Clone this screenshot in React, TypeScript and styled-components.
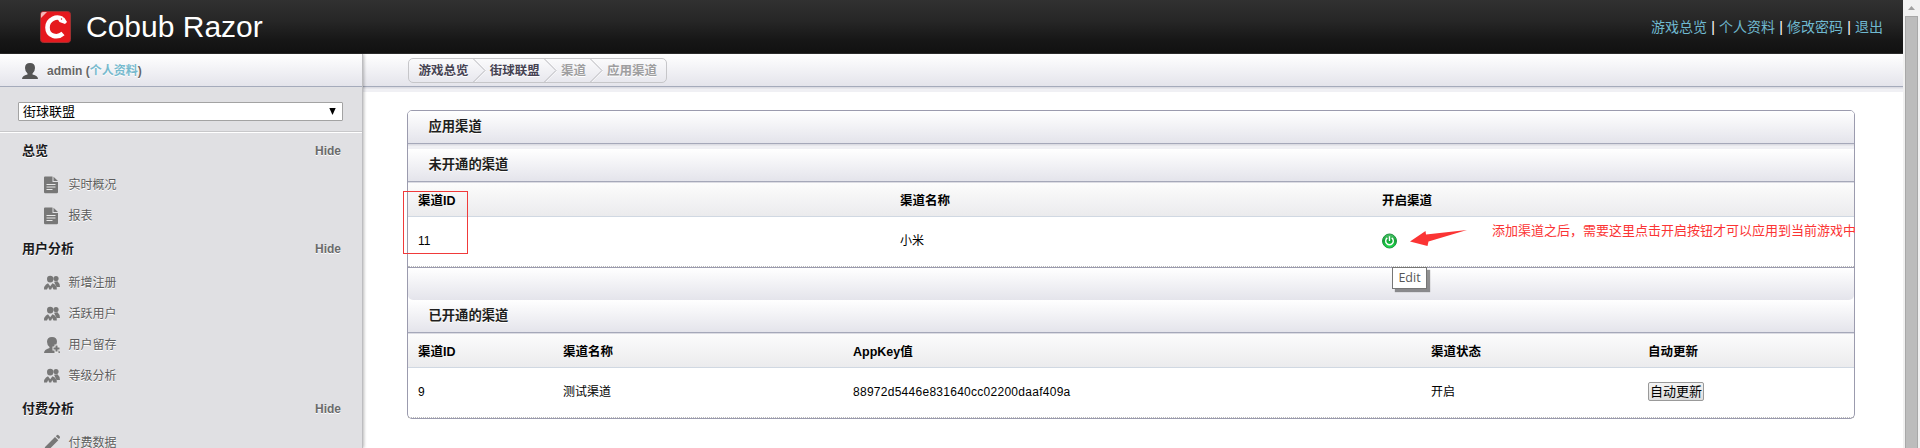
import React from 'react';
import styled, { createGlobalStyle } from 'styled-components';

const Global = createGlobalStyle`
  * { box-sizing: border-box; }
  html, body { margin: 0; height: 448px; overflow: hidden; background: #fff; }
  body { font: 12px/16px "Liberation Sans", Arial, "Noto Sans CJK SC", sans-serif; color: #000; }
`;
const Viewport = styled.div`
  display: grid;
  grid-template-columns: 1903px 17px;
  height: 448px;
  overflow: hidden;
`;
const Page = styled.div`
  display: grid;
  grid-template-rows: 54px 394px;
  min-width: 0;
`;
const Header = styled.header`
  display: flex;
  align-items: center;
  padding: 0 20px 0 40px;
  color: #fff;
  background: linear-gradient(#313131, #262626 40%, #171717 75%, #111);
  border-bottom: 1px solid #2b2b2b;
`;
const Brand = styled.h1`
  margin: 0 auto 0 14px;
  font-size: 30px;
  line-height: 52px;
  font-weight: 400;
`;
const TopLinks = styled.nav`
  display: flex;
  gap: 4.2px;
  font-size: 14px;
  line-height: 20px;
  white-space: nowrap;
`;
const Link = styled.a<{ $light?: boolean }>`
  color: ${p => (p.$light ? '#77bace' : '#6fb9d0')};
  text-decoration: none;
`;
const Body = styled.div`
  display: grid;
  grid-template-columns: 363px 1540px;
  height: 394px;
`;
const Sidebar = styled.aside`
  z-index: 1;
  height: 394px;
  overflow: hidden;
  background: #e0e0e3;
  border-right: 1px solid #bdbdc0;
  box-shadow: 1px 0 3px rgba(0,0,0,.28);
`;
const UserBar = styled.div`
  display: flex;
  align-items: center;
  height: 33px;
  gap: 9px;
  padding: 1px 0 0 22px;
  color: #666;
  font-weight: 700;
  text-shadow: 0 1px 0 #fff;
  background: linear-gradient(#fff, #e4e4eb);
  border-bottom: 1px solid #a5abbb;
`;
const Picker = styled.div`
  height: 46px;
  padding: 15px 19px 0 18px;
  border-bottom: 1px solid #fff;
  box-shadow: inset 0 -1px #c8c8ca;
`;
const SelectBox = styled.div`
  display: flex;
  align-items: center;
  justify-content: space-between;
  height: 19px;
  padding: 0 6px 0 4px;
  font-size: 13px;
  line-height: 15px;
  background: #fff;
  border: 1px solid #a3a3a3;
  border-radius: 1px;
`;
const Group = styled.section`
  padding-top: 8px;
`;
const GroupHead = styled.div`
  display: flex;
  align-items: center;
  justify-content: space-between;
  height: 20px;
  padding: 0 21px 0 22px;
  text-shadow: 0 1px 0 #fff;
`;
const GroupTitle = styled.h3`
  margin: 0;
  font-size: 13px;
  color: #1a1a1c;
`;
const Toggle = styled.span`
  font-weight: 700;
  color: #6b6b6b;
`;
const Items = styled.ul`
  list-style: none;
  margin: 0;
  padding: 8px 0 0 44px;
`;
const Item = styled.li`
  display: flex;
  align-items: center;
  height: 31px;
  gap: 8.5px;
  color: #5c5c5c;
  text-shadow: 0 1px 0 #fff;
`;
const Main = styled.main`
  min-width: 0;
`;
const CrumbBar = styled.div`
  height: 33px;
  padding: 4px 0 0 45px;
  background: linear-gradient(#fff, #e4e4eb);
  border-bottom: 1px solid #a5abbb;
  box-shadow: 0 1px 0 #dcdce3, 0 2px 0 #e6e6eb, 0 5px 0 #f0f0f4;
`;
const Crumbs = styled.div`
  display: flex;
  align-items: center;
  width: 259px;
  height: 25px;
  padding-left: 9.5px;
  border: 1px solid #c6c6c9;
  border-radius: 5px;
  text-shadow: 0 1px 0 #fff;
`;
const Crumb = styled.span<{ $dim?: boolean }>`
  font-size: 12.5px;
  font-weight: 700;
  white-space: nowrap;
  color: ${p => (p.$dim ? '#9e9ea0' : '#454252')};
`;
const Chevron = styled.svg`
  display: block;
  flex: none;
  margin: 0 4px 0 4.2px;
`;
const Panel = styled.section`
  position: relative;
  width: 1448px;
  height: 309px;
  margin: 23px 0 0 44px;
  background: #fff;
  border: 1px solid #9b9bae;
  border-radius: 5px;
`;
const PanelHead = styled.h2<{ $first?: boolean }>`
  display: flex;
  align-items: center;
  height: 33px;
  margin: 0 0 ${p => (p.$first ? 5 : 1)}px;
  padding-left: 20.5px;
  font-size: 13.3px;
  color: #1f1f20;
  text-shadow: 0 1px 0 #fff;
  background: linear-gradient(#fff, #e4e4eb);
  border-bottom: 1px solid #a5a8b9;
  border-radius: ${p => (p.$first ? '4px 4px 0 0' : '0')};
  box-shadow: ${p => (p.$first ? '0 1px 0 #dcdce3, 0 2px 0 #e6e6eb, 0 5px 0 #f0f0f4' : '0 1px 0 #dcdce3')};
`;
const PanelFoot = styled.div`
  height: 33px;
  border-top: 1px solid #9b9bae;
  background: linear-gradient(#fff, #e4e4eb);
  border-radius: 0 0 5px 5px;
`;
const Row = styled.div<{ $cols: string; $head?: boolean }>`
  display: grid;
  grid-template-columns: ${p => p.$cols};
  align-items: center;
  height: ${p => (p.$head ? 34 : 50)}px;
  padding: ${p => (p.$head ? '2px 0 0 10px' : '0 0 2px 10px')};
  font-size: ${p => (p.$head ? 12.5 : 12)}px;
  font-weight: ${p => (p.$head ? 700 : 400)};
  background: ${p => (p.$head ? 'linear-gradient(#fcfcfc, #ebebed)' : 'transparent')};
  border-bottom: ${p => (p.$head ? '1px solid #d0d8e2' : '1px dotted #bbb')};
`;
const AppKey = styled.span`
  letter-spacing: .27px;
`;
const UpdateButton = styled.button`
  height: 19px;
  width: 56px;
  padding: 0;
  font: 13px/15px "Liberation Sans", "Noto Sans CJK SC", sans-serif;
  color: #000;
  background: linear-gradient(#f4f4f4, #dedede);
  border: 1px solid #999;
  border-radius: 2px;
`;
const Highlight = styled.div`
  position: absolute;
  left: -5px;
  top: 80px;
  width: 65px;
  height: 63px;
  border: 1px solid #f03a3a;
`;
const Note = styled.div`
  position: absolute;
  left: 1084px;
  top: 110px;
  width: 363px;
  overflow: hidden;
  font-size: 13px;
  line-height: 20px;
  white-space: nowrap;
  color: #fb3434;
`;
const Arrow = styled.svg`
  position: absolute;
  left: 1002px;
  top: 119px;
`;
const Tooltip = styled.div`
  position: absolute;
  left: 984px;
  top: 156px;
  width: 35px;
  height: 22px;
  font: 12.5px/20px "Open Sans", "Noto Sans", sans-serif;
  text-align: center;
  color: #575757;
  background: #fff;
  border: 1px solid #767676;
  box-shadow: 3px 3px 1px rgba(0,0,0,.42);
`;
const Scrollbar = styled.div`
  display: flex;
  flex-direction: column;
  align-items: center;
  background: #f1f1f1;
`;
const ScrollButton = styled.svg`
  display: block;
  flex: none;
`;
const Thumb = styled.div`
  flex: 1;
  width: 13px;
  background: #bcbcbc;
  border: 1px solid #a8a8a8;
  border-bottom: 0;
`;

type IconKind = 'doc' | 'users' | 'add' | 'pencil';
const MenuIcon = ({ kind }: { kind: IconKind }) => (
  <svg width="16" height="18" viewBox="0 0 16 18" fill="#777">
    {kind === 'doc' && <>
      <path d="M1 .5h7.500v5.500H14V16q0 1.300-1.300 1.300H1.300Q0 17.300 0 16V1.500Q0 .5 1 .5zM9.500 .8L14 5H9.500z" />
      <path d="M2.500 8.500h9M2.500 11h9M2.500 13.500h6" stroke="#e8e8e8" strokeWidth="1.100" />
    </>}
    {kind === 'users' && <>
      <circle cx="12" cy="4.600" r="2.600" />
      <path d="M10 7.800l3.500-.5Q16 9.500 16 13h-3.500z" />
      <path d="M6.200 1.700q3.200 0 3.200 3.200 0 3.500-3.200 3.500T3 4.900q0-3.200 3.200-3.200zM0 15.500q0-3.500 2-5l2-1.200 2.200 3 2.300-3 2.300 1.200q2 1.500 2 5H9.500L8.200 13l-1 2.500h-2l-1-2.500-1.200 2.500z" />
    </>}
    {kind === 'add' && <>
      <path d="M8 1q5 0 5 4.700Q13 9 10.500 11v1q5.500 1.500 5.500 5H0q0-3.500 5.500-5v-1Q3 9 3 5.700 3 1 8 1z" />
      <path d="M12.500 8.500V17M8.500 12.500H16" stroke="#e8e8e8" strokeWidth="4" />
      <path d="M12.500 9.500v6M9.500 12.500h6" stroke="#777" strokeWidth="2" />
    </>}
    {kind === 'pencil' && <path d="M1 13L11 3l3.300 3.300L4.300 16.300 0 17.500zM11.800 2.200l1-1q1-.8 2 .2l.8.800q.8 1 0 2l-.8.800z" />}
  </svg>
);

const Separator = () => (
  <Chevron width="13" height="23" viewBox="0 0 13 23" fill="none">
    <path d="M1.500 0L13 11.500L1.500 23" stroke="#fff" />
    <path d="M.5 0L12 11.500L.5 23" stroke="#b4b4b9" />
  </Chevron>
);

const groups: { title: string; items: [IconKind, string][] }[] = [
  { title: '总览', items: [['doc', '实时概况'], ['doc', '报表']] },
  { title: '用户分析', items: [['users', '新增注册'], ['users', '活跃用户'], ['add', '用户留存'], ['users', '等级分析']] },
  { title: '付费分析', items: [['pencil', '付费数据']] },
];
const pendingCols = '482px 482px 1fr';
const openCols = '145px 290px 578px 217px 1fr';

export default function App() {
  return (
    <>
      <Global />
      <Viewport>
        <Page>
          <Header>
            <svg width="32" height="32" viewBox="0 0 32 32">
              <rect x=".5" y=".5" width="30" height="31" rx="3" fill="#e5191e" stroke="#9d3030" />
              <path d="M1 7V3q0-2 2-2h4z" fill="#f4b8b8" />
              <path d="M22 8C17 4.500 7.500 8 7.500 16.500C7.500 25.500 17.500 27.500 23 22.500" fill="none" stroke="#fff" strokeWidth="4.600" />
              <path d="M16 5.500q5-1.500 8.500 1.500l2.500 4-2 2-5.500-2z" fill="#fff" />
              <circle cx="21.500" cy="8" r=".7" fill="#e5191e" />
            </svg>
            <Brand>Cobub Razor</Brand>
            <TopLinks>
              <Link>游戏总览</Link>|<Link>个人资料</Link>|<Link>修改密码</Link>|<Link>退出</Link>
            </TopLinks>
          </Header>
          <Body>
            <Sidebar>
              <UserBar>
                <svg width="16" height="16" viewBox="0 0 16 16" fill="#555">
                  <path d="M8 0q5 0 5 5 0 3.500-2.500 5.500v1Q16 12.500 16 16H0q0-3.500 5.500-4.500v-1Q3 8.500 3 5q0-5 5-5z" />
                </svg>
                <span>admin (<Link $light>个人资料</Link>)</span>
              </UserBar>
              <Picker>
                <SelectBox>
                  <span>街球联盟</span>
                  <svg width="7" height="7" viewBox="0 0 7 7"><path d="M.3 0h6.400L3.500 7z" /></svg>
                </SelectBox>
              </Picker>
              {groups.map(group => (
                <Group key={group.title}>
                  <GroupHead><GroupTitle>{group.title}</GroupTitle><Toggle>Hide</Toggle></GroupHead>
                  <Items>
                    {group.items.map(([kind, label]) => <Item key={label}><MenuIcon kind={kind} />{label}</Item>)}
                  </Items>
                </Group>
              ))}
            </Sidebar>
            <Main>
              <CrumbBar>
                <Crumbs>
                  <Crumb>游戏总览</Crumb><Separator />
                  <Crumb>街球联盟</Crumb><Separator />
                  <Crumb $dim>渠道</Crumb><Separator />
                  <Crumb $dim>应用渠道</Crumb>
                </Crumbs>
              </CrumbBar>
              <Panel>
                <PanelHead $first>应用渠道</PanelHead>
                <PanelHead>未开通的渠道</PanelHead>
                <Row $head $cols={pendingCols}><span>渠道ID</span><span>渠道名称</span><span>开启渠道</span></Row>
                <Row $cols={pendingCols}>
                  <span>11</span><span>小米</span>
                  <svg width="16" height="16" viewBox="0 0 16 16">
                    <defs>
                      <linearGradient id="power" x1="0" y1="0" x2="0" y2="1">
                        <stop offset="0" stopColor="#4fc46c" />
                        <stop offset=".45" stopColor="#12a535" />
                        <stop offset="1" stopColor="#1fe04e" />
                      </linearGradient>
                    </defs>
                    <circle cx="7.500" cy="8" r="7" fill="url(#power)" stroke="#1f9440" />
                    <path d="M5.300 4.900a3.800 3.800 0 1 0 4.400 0M7.500 3.200v4.800" fill="none" stroke="#fff" strokeWidth="1.400" />
                  </svg>
                </Row>
                <PanelFoot />
                <PanelHead>已开通的渠道</PanelHead>
                <Row $head $cols={openCols}><span>渠道ID</span><span>渠道名称</span><span>AppKey值</span><span>渠道状态</span><span>自动更新</span></Row>
                <Row $cols={openCols}>
                  <span>9</span><span>测试渠道</span><AppKey>88972d5446e831640cc02200daaf409a</AppKey><span>开启</span><UpdateButton>自动更新</UpdateButton>
                </Row>
                <Highlight />
                <Arrow width="58" height="18" viewBox="0 0 58 18"><path d="M0 11.500L15.500 1l.5 3.500L57 0 18.500 11.500l-1 4.500z" fill="#fb3434" /></Arrow>
                <Note>添加渠道之后，需要这里点击开启按钮才可以应用到当前游戏中</Note>
                <Tooltip>Edit</Tooltip>
              </Panel>
            </Main>
          </Body>
        </Page>
        <Scrollbar>
          <ScrollButton width="17" height="16" viewBox="0 0 17 16"><path d="M5 10l3.500-4 3.500 4z" fill="#a0a0a0" /></ScrollButton>
          <Thumb />
        </Scrollbar>
      </Viewport>
    </>
  );
}
